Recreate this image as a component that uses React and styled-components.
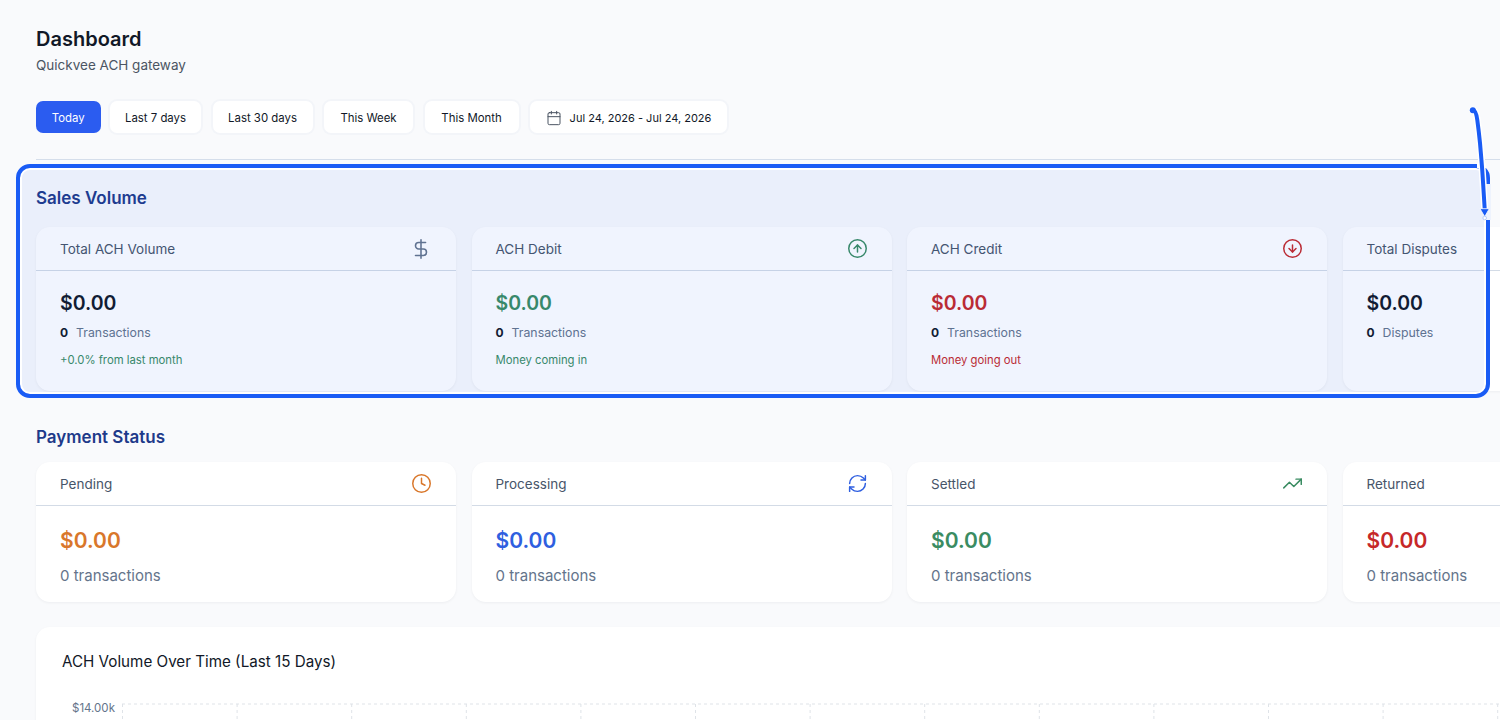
import { createGlobalStyle, styled } from "styled-components";
import {
  DollarSign, CircleArrowUp, CircleArrowDown, Clock, RefreshCw, TrendingUp, Calendar,
} from "lucide-react";

const GlobalStyle = createGlobalStyle`
  html, body {
    margin: 0;
    height: 720px;
    overflow: hidden;
    background: #f9fafc;
    font-family: Inter, "Noto Sans", sans-serif;
  }
  * { box-sizing: border-box; }
`;

const colors = {
  ink: "#111827",
  green: "#3a8c62",
  red: "#c62828",
  orange: "#d9772b",
  blue: "#2f5fe0",
  slate: "#64748b",
};

const ranges = [
  { label: "Last 7 days", width: 91 },
  { label: "Last 30 days", width: 100 },
  { label: "This Week", width: 89 },
  { label: "This Month", width: 94 },
];

const volumeCards = [
  { title: "Total ACH Volume", icon: DollarSign, iconColor: colors.slate, iconSize: 22, amount: colors.ink, count: "Transactions", note: "+0.0% from last month", noteColor: colors.green },
  { title: "ACH Debit", icon: CircleArrowUp, iconColor: colors.green, iconSize: 21, amount: colors.green, count: "Transactions", note: "Money coming in", noteColor: colors.green },
  { title: "ACH Credit", icon: CircleArrowDown, iconColor: colors.red, iconSize: 21, amount: colors.red, count: "Transactions", note: "Money going out", noteColor: colors.red },
  { title: "Total Disputes", amount: colors.ink, count: "Disputes" },
];

const statusCards = [
  { title: "Pending", icon: Clock, color: colors.orange },
  { title: "Processing", icon: RefreshCw, color: colors.blue },
  { title: "Settled", icon: TrendingUp, color: colors.green },
  { title: "Returned", color: colors.red },
];

const App = () => (
  <Page>
    <GlobalStyle />
    <Title>Dashboard</Title>
    <Subtitle>Quickvee ACH gateway</Subtitle>

    <Filters>
      <FilterButton $active $width={64.5}>Today</FilterButton>
      {ranges.map(({ label, width }) => (
        <FilterButton key={label} $width={width}>{label}</FilterButton>
      ))}
      <DateButton $width={197}>
        <Calendar size={16} strokeWidth={1.5} color="#4b5563" />
        Jul 24, 2026 - Jul 24, 2026
      </DateButton>
    </Filters>

    <Divider />

    <SalesSection>
      <SectionTitle $gap={18}>Sales Volume</SectionTitle>
      <CardRow>
        {volumeCards.map(({ title, icon: Icon, iconColor, iconSize, amount, count, note, noteColor }) => (
          <Card key={title} $height={164}>
            <CardHeader>
              <CardTitle>{title}</CardTitle>
              {Icon && <Icon size={iconSize} strokeWidth={1.7} color={iconColor} />}
            </CardHeader>
            <VolumeBody>
              <Amount $color={amount}>$0.00</Amount>
              <CountRow>
                <strong>0</strong>
                <span>{count}</span>
              </CountRow>
              {note && <Note $color={noteColor}>{note}</Note>}
            </VolumeBody>
          </Card>
        ))}
      </CardRow>
      <Highlight />
      <Arrow width="24" height="116" viewBox="0 0 24 116">
        <rect x="8" y="58" width="9" height="5" fill="#fff" />
        <rect x="16" y="79" width="6" height="36" fill="#eef3fd" />
        <path d="M3.7 5 C6.5 5 7.6 10 8.3 15 C9.5 24 10.2 30 11 38 C12 50 13 60 13.7 72 L15.7 104" fill="none" stroke="#fff" strokeWidth="7" strokeLinecap="round" />
        <path d="M3.7 5 C6.5 5 7.6 10 8.3 15 C9.5 24 10.2 30 11 38 C12 50 13 60 13.7 72 L15.7 104" fill="none" stroke="#1a5cf5" strokeWidth="4" strokeLinecap="round" />
        <circle cx="3.8" cy="5.2" r="3" fill="#1a5cf5" />
        <path d="M11 103.7 L20.3 103.7 L15.7 111.7 Z" fill="#1a5cf5" stroke="#fff" strokeWidth="0.8" />
        <circle cx="15.7" cy="113" r="1.8" fill="#fff" stroke="#a9c1f7" strokeWidth="0.8" />
      </Arrow>
    </SalesSection>

    <SectionTitle $gap={14}>Payment Status</SectionTitle>
    <CardRow>
      {statusCards.map(({ title, icon: Icon, color }) => (
        <Card key={title} $height={140}>
          <CardHeader>
            <CardTitle>{title}</CardTitle>
            {Icon && <Icon size={21} strokeWidth={1.7} color={color} />}
          </CardHeader>
          <StatusBody>
            <StatusAmount $color={color}>$0.00</StatusAmount>
            <StatusCount>0 transactions</StatusCount>
          </StatusBody>
        </Card>
      ))}
    </CardRow>

    <ChartCard>
      <ChartTitle>ACH Volume Over Time (Last 15 Days)</ChartTitle>
      <ChartArea>
        <AxisLabel>$14.00k</AxisLabel>
        <svg width="1420" height="40" viewBox="0 0 1420 40">
          <line x1="0" y1="1" x2="1420" y2="1" stroke="#dfe3e8" strokeDasharray="3 3" />
          {Array.from({ length: 13 }, (_, i) => (
            <line key={i} x1={i * 114.6 + 0.5} y1="1" x2={i * 114.6 + 0.5} y2="40" stroke="#dfe3e8" strokeDasharray="3 3" />
          ))}
        </svg>
      </ChartArea>
    </ChartCard>
  </Page>
);

export default App;

const Page = styled.div`
  width: 1500px;
  height: 720px;
  overflow: hidden;
  padding: 27px 0 0 36px;
`;

const Title = styled.h1`
  margin: 0;
  font-size: 20px;
  line-height: 24px;
  font-weight: 600;
  color: #111827;
`;

const Subtitle = styled.p`
  margin: 4px 0 0;
  font-size: 13.5px;
  line-height: 20px;
  color: #4b5563;
`;

const Filters = styled.div`
  display: flex;
  gap: 11.5px;
  margin-top: 26px;
`;

const FilterButton = styled.button`
  display: flex;
  align-items: center;
  justify-content: center;
  width: ${(p) => p.$width}px;
  height: 32px;
  margin-right: ${(p) => (p.$active ? "-2px" : "0")};
  padding: 1px 0 0;
  border: 0;
  border-radius: 7px;
  font: 400 11.4px Inter, sans-serif;
  color: ${(p) => (p.$active ? "#fff" : "#111827")};
  background: ${(p) => (p.$active ? "#2b5cf0" : "#fff")};
  box-shadow: ${(p) => (p.$active ? "none" : "0 0 0 2px #f3f5f9")};
`;

const DateButton = styled(FilterButton)`
  gap: 8px;
  font-size: 11px;
`;

const Divider = styled.div`
  height: 1px;
  margin-top: 26px;
  background: #d5deeb;
`;

const SalesSection = styled.section`
  position: relative;
  margin-top: 27px;
  margin-bottom: 35px;
`;

const SectionTitle = styled.h2`
  margin: 0 0 ${(p) => p.$gap}px;
  font-size: 17px;
  line-height: 22px;
  font-weight: 600;
  color: #1e3a8a;
`;

const CardRow = styled.div`
  display: grid;
  grid-template-columns: repeat(4, 420px);
  column-gap: 15.5px;
`;

const Card = styled.article`
  height: ${(p) => p.$height}px;
  border-radius: 14px;
  background: #fff;
  box-shadow: 0 1px 3px rgba(15, 23, 42, 0.05);
  overflow: hidden;
`;

const CardHeader = styled.header`
  display: flex;
  align-items: center;
  justify-content: space-between;
  height: 44px;
  padding: 0 24px;
  border-bottom: 1px solid #d3dbe6;
`;

const CardTitle = styled.h3`
  margin: 0;
  font-size: 13.5px;
  font-weight: 400;
  color: #475569;
`;

const VolumeBody = styled.div`
  padding: 20px 24px 0;
`;

const Amount = styled.div`
  font-size: 19.5px;
  line-height: 24px;
  font-weight: 600;
  color: ${(p) => p.$color};
`;

const CountRow = styled.div`
  display: flex;
  gap: 8px;
  margin-top: 8px;
  font-size: 12.3px;
  line-height: 20px;
  color: #64748b;

  strong {
    font-weight: 700;
    font-size: 12px;
    color: #111827;
  }
`;

const Note = styled.div`
  margin-top: 9px;
  font-size: 11.3px;
  line-height: 16px;
  color: ${(p) => p.$color};
`;

const StatusBody = styled.div`
  padding: 21px 24px 0;
`;

const StatusAmount = styled.div`
  font-size: 21px;
  line-height: 28px;
  font-weight: 600;
  color: ${(p) => p.$color};
`;

const StatusCount = styled.div`
  margin-top: 11px;
  font-size: 15px;
  line-height: 20px;
  color: #64748b;
`;

const ChartCard = styled.section`
  width: 1600px;
  height: 300px;
  margin-top: 25px;
  padding: 24px 26px;
  border-radius: 14px;
  background: #fff;
  box-shadow: 0 1px 3px rgba(15, 23, 42, 0.05);
`;

const ChartTitle = styled.h2`
  margin: 0;
  font-size: 15.2px;
  line-height: 22px;
  font-weight: 400;
  color: #111827;
`;

const ChartArea = styled.div`
  display: flex;
  gap: 6px;
  margin-top: 30px;
`;

const AxisLabel = styled.span`
  width: 44px;
  margin-left: 10px;
  margin-top: -3px;
  font-size: 11.5px;
  line-height: 16px;
  color: #64748b;
`;

// annotation drawn over the section, the tint lets the cards show through
const Highlight = styled.div`
  position: absolute;
  left: -20px;
  top: -23px;
  width: 1474px;
  height: 234px;
  border: 4px solid #1a5cf5;
  border-radius: 14px;
  background: rgba(30, 90, 245, 0.065);
  box-shadow: inset 0 0 0 2px #fff;
  pointer-events: none;
`;

const Arrow = styled.svg`
  position: absolute;
  left: 1433px;
  top: -82px;
`;
